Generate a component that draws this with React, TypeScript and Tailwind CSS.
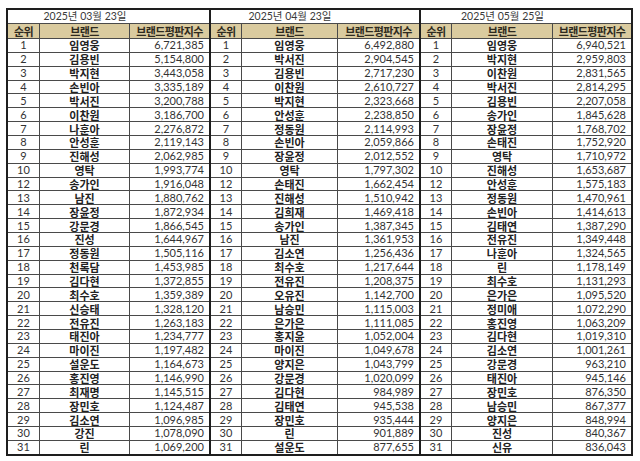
import React from 'react';

type Row = [number, string, string];

interface RankTable {
  date: string;
  rankW: string;
  brandW: string;
  rows: Row[];
}

const tables: RankTable[] = [
  {
    date: '2025년 03월 23일',
    rankW: 'w-[32px]',
    brandW: 'w-[90px]',
    rows: [
      [1, '임영웅', '6,721,385'],
      [2, '김용빈', '5,154,800'],
      [3, '박지현', '3,443,058'],
      [4, '손빈아', '3,335,189'],
      [5, '박서진', '3,200,788'],
      [6, '이찬원', '3,186,700'],
      [7, '나훈아', '2,276,872'],
      [8, '안성훈', '2,119,143'],
      [9, '진해성', '2,062,985'],
      [10, '영탁', '1,993,774'],
      [12, '송가인', '1,916,048'],
      [13, '남진', '1,880,762'],
      [14, '장윤정', '1,872,934'],
      [15, '강문경', '1,866,545'],
      [16, '진성', '1,644,967'],
      [17, '정동원', '1,505,116'],
      [18, '천록담', '1,453,985'],
      [19, '김다현', '1,372,855'],
      [20, '최수호', '1,359,389'],
      [21, '신승태', '1,328,120'],
      [22, '전유진', '1,263,183'],
      [23, '태진아', '1,234,777'],
      [24, '마이진', '1,197,482'],
      [25, '설운도', '1,164,673'],
      [26, '홍진영', '1,146,990'],
      [27, '최재명', '1,145,515'],
      [28, '장민호', '1,124,487'],
      [29, '김소연', '1,096,985'],
      [30, '강진', '1,078,090'],
      [31, '린', '1,069,200'],
    ],
  },
  {
    date: '2025년 04월 23일',
    rankW: 'w-[31px]',
    brandW: 'w-[96px]',
    rows: [
      [1, '임영웅', '6,492,880'],
      [2, '박서진', '2,904,545'],
      [3, '김용빈', '2,717,230'],
      [4, '이찬원', '2,610,727'],
      [5, '박지현', '2,323,668'],
      [6, '안성훈', '2,238,850'],
      [7, '정동원', '2,114,993'],
      [8, '손빈아', '2,059,866'],
      [9, '장윤정', '2,012,552'],
      [10, '영탁', '1,797,302'],
      [12, '손태진', '1,662,454'],
      [13, '진해성', '1,510,942'],
      [14, '김희재', '1,469,418'],
      [15, '송가인', '1,387,345'],
      [16, '남진', '1,361,953'],
      [17, '김소연', '1,256,436'],
      [18, '최수호', '1,217,644'],
      [19, '전유진', '1,208,375'],
      [20, '오유진', '1,142,700'],
      [21, '남승민', '1,115,003'],
      [22, '은가은', '1,111,085'],
      [23, '홍지윤', '1,052,004'],
      [24, '마이진', '1,049,678'],
      [25, '양지은', '1,043,799'],
      [26, '강문경', '1,020,099'],
      [27, '김다현', '984,989'],
      [28, '김태연', '945,538'],
      [29, '장민호', '935,444'],
      [30, '린', '901,889'],
      [31, '설운도', '877,655'],
    ],
  },
  {
    date: '2025년 05월 25일',
    rankW: 'w-[31px]',
    brandW: 'w-[101px]',
    rows: [
      [1, '임영웅', '6,940,521'],
      [2, '박지현', '2,959,803'],
      [3, '이찬원', '2,831,565'],
      [4, '박서진', '2,814,295'],
      [5, '김용빈', '2,207,058'],
      [6, '송가인', '1,845,628'],
      [7, '장윤정', '1,768,702'],
      [8, '손태진', '1,752,920'],
      [9, '영탁', '1,710,972'],
      [10, '진해성', '1,653,687'],
      [12, '안성훈', '1,575,183'],
      [13, '정동원', '1,470,961'],
      [14, '손빈아', '1,414,613'],
      [15, '김태연', '1,387,290'],
      [16, '전유진', '1,349,448'],
      [17, '나훈아', '1,324,565'],
      [18, '린', '1,178,149'],
      [19, '최수호', '1,131,293'],
      [20, '은가은', '1,095,520'],
      [21, '정미애', '1,072,290'],
      [22, '홍진영', '1,063,209'],
      [23, '김다현', '1,019,310'],
      [24, '김소연', '1,001,261'],
      [25, '강문경', '963,210'],
      [26, '태진아', '945,146'],
      [27, '장민호', '876,350'],
      [28, '남승민', '867,377'],
      [29, '양지은', '848,994'],
      [30, '진성', '840,367'],
      [31, '신유', '836,043'],
    ],
  },
];

const NUM_FONT = "font-['Lato','Noto_Sans_CJK_KR',sans-serif]";
const KR_FONT = "font-['Noto_Sans_CJK_KR',sans-serif]";

const Table: React.FC<{ t: RankTable; first?: boolean; width: string }> = ({ t, first, width }) => (
  <div className={`${width} border-y-2 border-r-2 border-[#1e1e1e] ${first ? 'border-l-2' : ''} flex flex-col`}>
    {/* title row */}
    <div className="h-[13px] flex items-center">
      <div className={`${t.rankW} shrink-0`} />
      <div className={`${t.brandW} shrink-0 text-center text-[10.5px] leading-[13px] text-[#3a3a3a] whitespace-nowrap ${NUM_FONT}`}>
        {t.date}
      </div>
    </div>
    {/* header row */}
    <div className={`h-[15px] flex border-t border-[#4a4a4a] bg-[#dacb9f] text-[11px] leading-[13px] font-bold text-[#2e2a20] tracking-[-0.6px] ${KR_FONT}`}>
      <div className={`${t.rankW} shrink-0 border-r border-[#4a4a4a] flex items-center justify-center`}>순위</div>
      <div className={`${t.brandW} shrink-0 border-r border-[#4a4a4a] flex items-center justify-center`}>브랜드</div>
      <div className="flex-1 flex items-center justify-center">브랜드평판지수</div>
    </div>
    {t.rows.map(([rank, name, score]) => (
      <div key={rank} className="h-[13.87px] flex border-t border-[#4a4a4a]">
        <div className={`${t.rankW} shrink-0 border-r border-[#4a4a4a] flex items-center justify-center text-[11px] leading-[12px] text-[#333] ${NUM_FONT}`}>
          {rank}
        </div>
        <div className={`${t.brandW} shrink-0 border-r border-[#4a4a4a] flex items-center justify-center text-[11px] leading-[12px] font-bold text-[#222] ${KR_FONT}`}>
          {name}
        </div>
        <div className={`flex-1 flex items-center justify-end pr-[5px] text-[11px] leading-[12px] text-[#333] ${NUM_FONT}`}>
          {score}
        </div>
      </div>
    ))}
  </div>
);

export default function App() {
  return (
    <div className="w-[640px] h-[461px] bg-white overflow-hidden pl-[6px] pt-[8px] flex items-start">
      <Table t={tables[0]} first width="w-[205px]" />
      <Table t={tables[1]} width="w-[210px]" />
      <Table t={tables[2]} width="w-[212px]" />
    </div>
  );
}
